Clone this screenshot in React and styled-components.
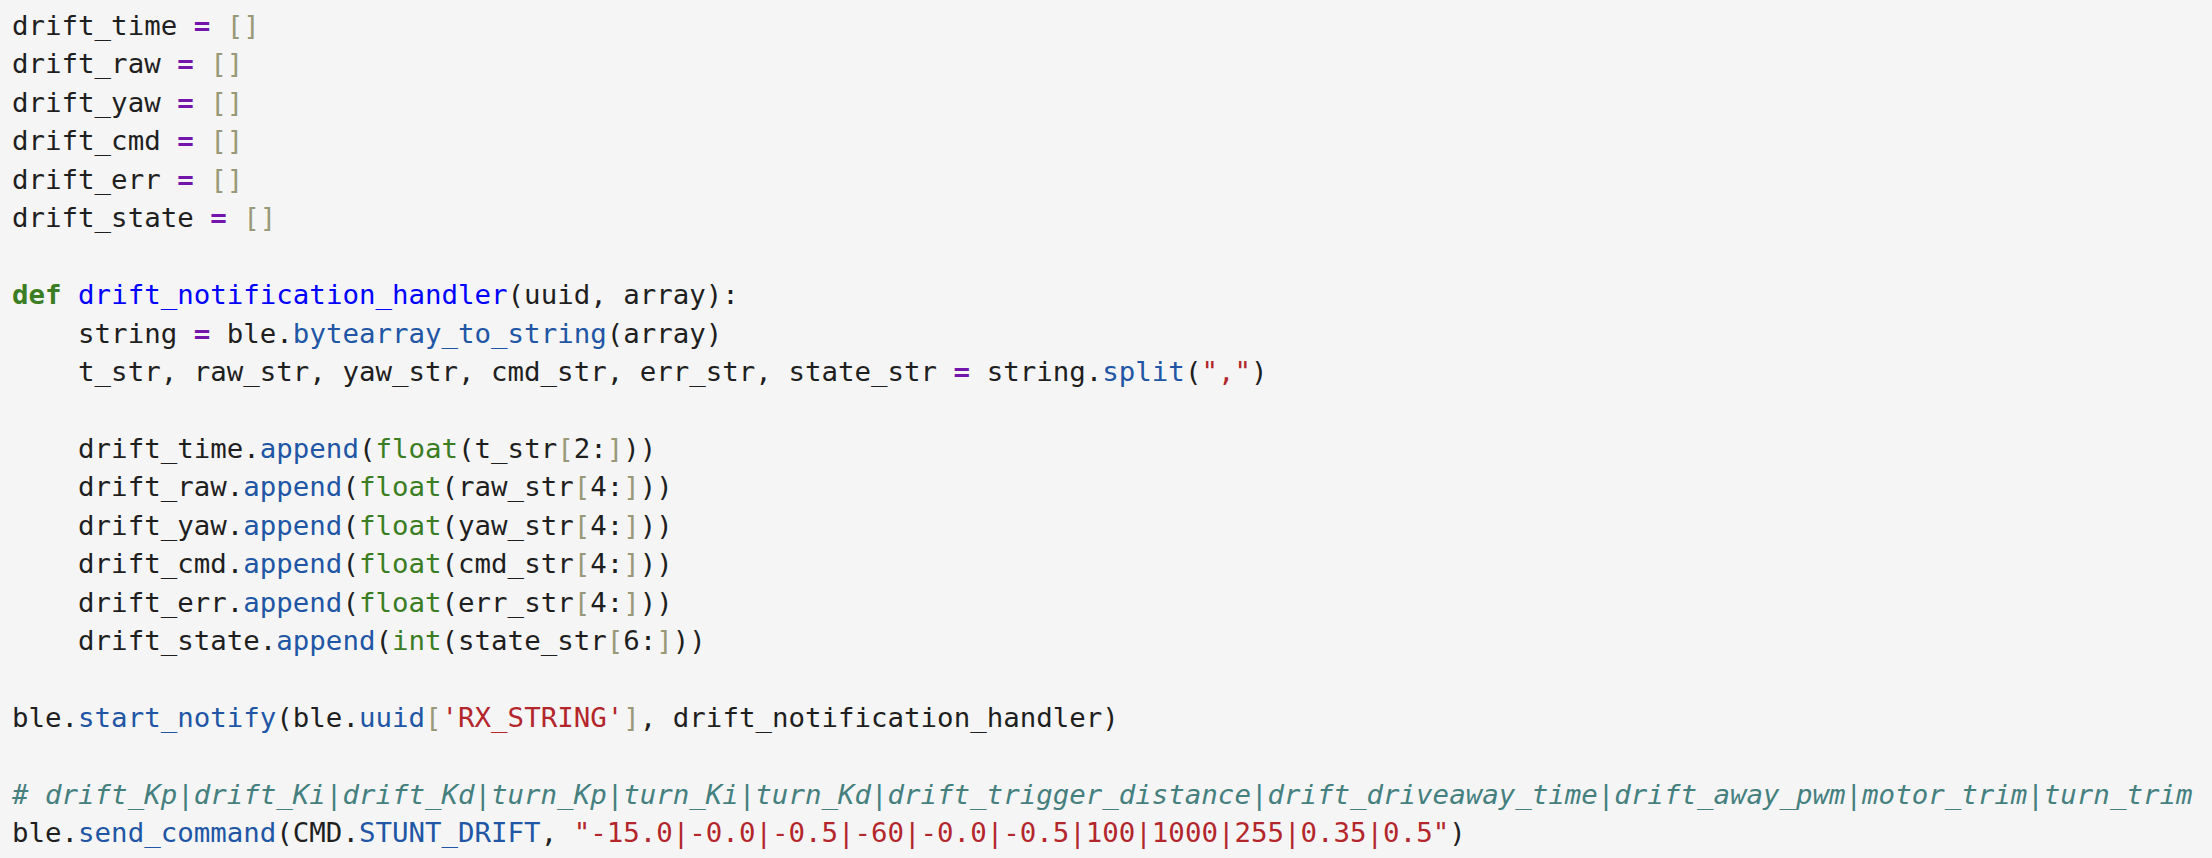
import React from "react";
import styled, { createGlobalStyle } from "styled-components";

const GlobalStyle = createGlobalStyle`
  html, body {
    margin: 0;
    padding: 0;
    background: #f5f5f5;
  }
`;

const colors = {
  name: "#1f1f1f",
  op: "#7216ab",
  bracket: "#999977",
  keyword: "#3b7d23",
  def: "#0000ff",
  prop: "#2156a5",
  builtin: "#3b7d23",
  string: "#b3262b",
  comment: "#45807f",
};

const Editor = styled.div`
  width: 2212px;
  height: 858px;
  box-sizing: border-box;
  padding: 7px 0 0 12px;
  background: #f5f5f5;
  overflow: hidden;
`;

const Pre = styled.pre`
  margin: 0;
  font-family: "DejaVu Sans Mono", "Liberation Mono", monospace;
  font-size: 27.45px;
  line-height: 38.45px;
  color: ${colors.name};
  white-space: pre;
`;

const Line = styled.div`
  height: 38.45px;
`;

const Tok = styled.span`
  color: ${(p) => colors[p.k] || colors.name};
  font-weight: ${(p) => (p.k === "keyword" || p.k === "op" ? "bold" : "normal")};
  font-style: ${(p) => (p.k === "comment" ? "italic" : "normal")};
`;

// tokens: [kind, text]
const N = (t) => ["name", t];
const O = ["op", "="];
const B = (t) => ["bracket", t];
const P = (t) => ["prop", t];
const S = (t) => ["string", t];
const F = (t) => ["builtin", t];

const emptyList = (name) => [N(name + " "), O, N(" "), B("[]")];

const appendLine = (target, fn, src, idx) => [
  N("    " + target + "."),
  P("append"),
  N("("),
  F(fn),
  N("(" + src),
  B("["),
  N(idx + ":"),
  B("]"),
  N("))"),
];

const lines = [
  emptyList("drift_time"),
  emptyList("drift_raw"),
  emptyList("drift_yaw"),
  emptyList("drift_cmd"),
  emptyList("drift_err"),
  emptyList("drift_state"),
  [],
  [["keyword", "def"], N(" "), ["def", "drift_notification_handler"], N("(uuid, array):")],
  [N("    string "), O, N(" ble."), P("bytearray_to_string"), N("(array)")],
  [
    N("    t_str, raw_str, yaw_str, cmd_str, err_str, state_str "),
    O,
    N(" string."),
    P("split"),
    N("("),
    S('","'),
    N(")"),
  ],
  [],
  appendLine("drift_time", "float", "t_str", "2"),
  appendLine("drift_raw", "float", "raw_str", "4"),
  appendLine("drift_yaw", "float", "yaw_str", "4"),
  appendLine("drift_cmd", "float", "cmd_str", "4"),
  appendLine("drift_err", "float", "err_str", "4"),
  appendLine("drift_state", "int", "state_str", "6"),
  [],
  [
    N("ble."),
    P("start_notify"),
    N("(ble."),
    P("uuid"),
    B("["),
    S("'RX_STRING'"),
    B("]"),
    N(", drift_notification_handler)"),
  ],
  [],
  [
    [
      "comment",
      "# drift_Kp|drift_Ki|drift_Kd|turn_Kp|turn_Ki|turn_Kd|drift_trigger_distance|drift_driveaway_time|drift_away_pwm|motor_trim|turn_trim",
    ],
  ],
  [
    N("ble."),
    P("send_command"),
    N("(CMD."),
    P("STUNT_DRIFT"),
    N(", "),
    S('"-15.0|-0.0|-0.5|-60|-0.0|-0.5|100|1000|255|0.35|0.5"'),
    N(")"),
  ],
];

const App = () => {
  return (
    <>
      <GlobalStyle />
      <Editor>
        <Pre>
          {lines.map((toks, i) => (
            <Line key={i}>
              {toks.map(([k, t], j) => (
                <Tok key={j} k={k}>
                  {t}
                </Tok>
              ))}
            </Line>
          ))}
        </Pre>
      </Editor>
    </>
  );
};

export default App;
